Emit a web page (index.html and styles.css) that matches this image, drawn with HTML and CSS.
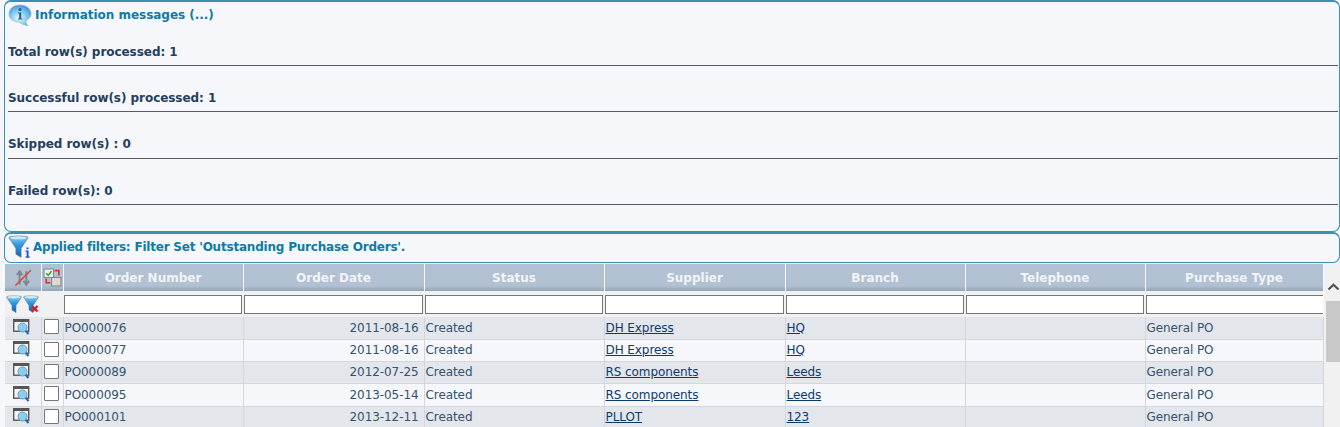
FILE: index.html
```html
<!DOCTYPE html>
<html lang="en">

<head>
    <meta charset="UTF-8">
    <title>Purchase Orders</title>
    <link rel="stylesheet" href="styles.css">
</head>

<body>
    <svg class="defs" width="0" height="0">
        <defs>
            <linearGradient id="funnelBlue" x1="0" y1="0" x2="0" y2="1">
                <stop offset="0" stop-color="#8fd4f2" />
                <stop offset="0.45" stop-color="#2a93dc" />
                <stop offset="1" stop-color="#1a5fb0" />
            </linearGradient>
            <radialGradient id="bubbleBlue" cx="0.45" cy="0.65" r="0.7">
                <stop offset="0" stop-color="#eef9fe" />
                <stop offset="0.5" stop-color="#86ccf1" />
                <stop offset="1" stop-color="#2f8fd3" />
            </radialGradient>
            <symbol id="funnel" viewBox="0 0 16 18">
                <path d="M.5 2C.5 .5 15.500 .5 15.500 2L10 10.500V17.500L6 15V10.500Z" fill="url(#funnelBlue)" stroke="#5f7f98" stroke-width=".6" />
                <ellipse cx="8" cy="2.200" rx="6.500" ry="1.200" fill="#cfeaf7" />
            </symbol>
            <symbol id="viewIcon" viewBox="0 0 17 16">
                <rect x=".7" y=".7" width="15" height="11.500" fill="#f4f4f4" stroke="#555" stroke-width="1.400" />
                <rect x="1" y="1" width="14" height="2" fill="#555" />
                <circle cx="9.500" cy="8.500" r="4.500" fill="#86cff3" stroke="#7d97aa" />
                <path d="M12.800 12 15.500 15" stroke="#1d62c4" stroke-width="2" />
            </symbol>
        </defs>
    </svg>

    <div class="panel infoPanel">
        <div class="panelTitle">
            <svg class="bubble" width="24" height="23" viewBox="0 0 24 23">
                <path d="M12 1C5.500 1 1 4.800 1 9.800 1 14.600 5.500 18 11 18 13.500 20 16.500 21.500 20 21.500 18.300 20 17.800 18.500 18 16.600 21.300 15 23 12.600 23 9.800 23 4.800 18.500 1 12 1Z" fill="url(#bubbleBlue)" stroke="#9cb8c8" stroke-width=".8" />
                <circle cx="12" cy="5.600" r="1.500" fill="#2a5d84" />
                <path d="M10 8.500H13.200V14.500H14.400V15.500H10V14.500H11.200V9.500H10Z" fill="#2a5d84" />
            </svg>
            <span>Information messages (...)</span>
        </div>
        <div class="msg">Total row(s) processed: 1</div>
        <div class="msg">Successful row(s) processed: 1</div>
        <div class="msg">Skipped row(s) : 0</div>
        <div class="msg">Failed row(s): 0</div>
    </div>

    <div class="panel filterPanel">
        <svg class="funnelBig" width="22" height="24" viewBox="0 0 22 24">
            <use href="#funnel" x="0" y="0" width="21" height="23" />
            <path d="M18.500 12.500h2v1.800h-2ZM17.500 15.500h3v6h1.200v1.300h-4.200v-1.300h1.200v-4.800h-1.200Z" fill="#2447d8" />
        </svg>
        <span>Applied filters: Filter Set 'Outstanding Purchase Orders'.</span>
    </div>

    <div class="gridWrap">
        <table class="grid">
            <colgroup>
                <col class="colView">
                <col class="colCheck">
                <col class="colA">
                <col class="colB">
                <col class="colA">
                <col class="colB">
                <col class="colA">
                <col class="colA">
                <col class="colLast">
            </colgroup>
            <thead>
                <tr class="headRow">
                    <th>
                        <svg width="20" height="20" viewBox="0 0 18 18">
                            <path d="M6 15V4M3.500 6.500 6 3 8.500 6.500M12 3V14M9.500 11.500 12 15 14.500 11.500" fill="none" stroke="#7d8890" stroke-width="1.800" />
                            <path d="M2 16 16 2" stroke="#e0413c" stroke-width="1.400" />
                        </svg>
                    </th>
                    <th>
                        <svg width="19" height="19" viewBox="0 0 18 18">
                            <rect x="1" y="1" width="9" height="8" fill="#eef2ee" stroke="#777" stroke-width=".8" />
                            <path d="M3 5 5 7 8 3" fill="none" stroke="#3aa02f" stroke-width="1.500" />
                            <rect x="8" y="9" width="9" height="8" fill="#d9d9d9" stroke="#777" stroke-width=".8" />
                            <path d="M11 2.500H15V7M3 10V14H7" fill="none" stroke="#d6332e" stroke-width="1.500" />
                        </svg>
                    </th>
                    <th>Order Number</th>
                    <th>Order Date</th>
                    <th>Status</th>
                    <th>Supplier</th>
                    <th>Branch</th>
                    <th>Telephone</th>
                    <th>Purchase Type</th>
                </tr>
                <tr class="filterRow">
                    <td colspan="2">
                        <div class="filterIcons">
                            <svg width="16" height="18"><use href="#funnel" width="16" height="18" /></svg>
                            <svg width="16" height="18" viewBox="0 0 16 18">
                                <use href="#funnel" width="16" height="18" />
                                <path d="M9 11 14.500 16.500M14.500 11 9 16.500" stroke="#d0202a" stroke-width="2.400" />
                            </svg>
                        </div>
                    </td>
                    <td><input type="text"></td>
                    <td><input type="text"></td>
                    <td><input type="text"></td>
                    <td><input type="text"></td>
                    <td><input type="text"></td>
                    <td><input type="text"></td>
                    <td class="lastFilter"><input type="text"></td>
                </tr>
            </thead>
            <tbody>
                <tr>
                    <td class="iconCell"><svg width="17" height="16"><use href="#viewIcon" /></svg></td>
                    <td class="checkCell"><span class="check"></span></td>
                    <td>PO000076</td>
                    <td class="num">2011-08-16</td>
                    <td>Created</td>
                    <td><a href="#">DH Express</a></td>
                    <td><a href="#">HQ</a></td>
                    <td></td>
                    <td>General PO</td>
                </tr>
                <tr>
                    <td class="iconCell"><svg width="17" height="16"><use href="#viewIcon" /></svg></td>
                    <td class="checkCell"><span class="check"></span></td>
                    <td>PO000077</td>
                    <td class="num">2011-08-16</td>
                    <td>Created</td>
                    <td><a href="#">DH Express</a></td>
                    <td><a href="#">HQ</a></td>
                    <td></td>
                    <td>General PO</td>
                </tr>
                <tr>
                    <td class="iconCell"><svg width="17" height="16"><use href="#viewIcon" /></svg></td>
                    <td class="checkCell"><span class="check"></span></td>
                    <td>PO000089</td>
                    <td class="num">2012-07-25</td>
                    <td>Created</td>
                    <td><a href="#">RS components</a></td>
                    <td><a href="#">Leeds</a></td>
                    <td></td>
                    <td>General PO</td>
                </tr>
                <tr class="tall">
                    <td class="iconCell"><svg width="17" height="16"><use href="#viewIcon" /></svg></td>
                    <td class="checkCell"><span class="check"></span></td>
                    <td>PO000095</td>
                    <td class="num">2013-05-14</td>
                    <td>Created</td>
                    <td><a href="#">RS components</a></td>
                    <td><a href="#">Leeds</a></td>
                    <td></td>
                    <td>General PO</td>
                </tr>
                <tr>
                    <td class="iconCell"><svg width="17" height="16"><use href="#viewIcon" /></svg></td>
                    <td class="checkCell"><span class="check"></span></td>
                    <td>PO000101</td>
                    <td class="num">2013-12-11</td>
                    <td>Created</td>
                    <td><a href="#">PLLOT</a></td>
                    <td><a href="#">123</a></td>
                    <td></td>
                    <td>General PO</td>
                </tr>
            </tbody>
        </table>
        <div class="scrollBar">
            <svg class="upArrow" width="13" height="8" viewBox="0 0 13 8">
                <path d="M1.500 6.500 6.500 1.800 11.500 6.500" fill="none" stroke="#505050" stroke-width="2.200" />
            </svg>
            <div class="thumb"></div>
        </div>
    </div>
</body>

</html>
```
FILE: styles.css
```css
* {
    margin: 0;
    padding: 0;
    box-sizing: border-box;
}

html,
body {
    height: 427px;
    overflow: hidden;
}

body {
    font-family: "DejaVu Sans", Verdana, sans-serif;
    font-size: 12px;
    color: #34526f;
    background-color: #f6f7fa;
}

.defs {
    position: absolute;
}

.panel {
    margin-left: 4px;
    background-color: #f6f7fa;
    border: 1px solid #3a8fb3;
    border-radius: 7px;
}

.infoPanel {
    height: 232px;
    border-top-width: 2px;
    padding: 2px 1px 0 3px;
}

.panelTitle {
    display: flex;
    align-items: flex-start;
    gap: 3px;
    height: 23px;
    font-weight: bold;
    letter-spacing: -0.03px;
    color: #0d7ba6;
}

.panelTitle span {
    padding-top: 4px;
}

.msg {
    height: 46.33px;
    padding-top: 25px;
    font-weight: bold;
    letter-spacing: -0.05px;
    color: #23405f;
    border-bottom: 1px solid #555b60;
}

.panelTitle + .msg {
    margin-top: -7px;
    height: 46px;
}

.filterPanel {
    display: flex;
    align-items: flex-start;
    gap: 3px;
    height: 31px;
    padding: 1px 0 0 3px;
    border-top-width: 2px;
    font-weight: bold;
    letter-spacing: -0.21px;
    color: #0d7ba6;
}

.filterPanel span {
    padding-top: 5px;
}

.funnelBig {
    flex: none;
}

.gridWrap {
    display: flex;
    margin: 1px 0 0 5px;
}

.grid {
    flex: none;
    width: 1318px;
    table-layout: fixed;
    border-collapse: collapse;
}

.colView {
    width: 36px;
}

.colCheck {
    width: 22px;
}

.colA {
    width: 180px;
}

.colB {
    width: 181px;
}

.colLast {
    width: 178px;
}

.headRow th {
    height: 27px;
    color: #f1f4f8;
    background: linear-gradient(#b1c1d2 0, #b1c1d2 80%, #93a4b6 100%);
    border-right: 1px solid #f6f7fa;
    vertical-align: middle;
}

.headRow svg {
    display: block;
    margin: 0 auto;
}

.filterRow td {
    height: 26px;
    padding: 0 1px;
    background-color: #f1f1f2;
    vertical-align: middle;
}

.filterRow input {
    display: block;
    width: 100%;
    height: 19px;
    border: 1px solid #767676;
    background-color: #fff;
}

.filterRow .lastFilter {
    padding-right: 0;
    overflow: hidden;
}

.lastFilter input {
    width: calc(100% + 4px);
}

.filterIcons {
    display: flex;
    gap: 1px;
}

tbody tr {
    height: 22px;
}

tbody tr.tall {
    height: 23px;
}

tbody tr:nth-child(odd) {
    background-color: #e3e6eb;
}

tbody tr:nth-child(even) {
    background-color: #f6f7fa;
}

tbody td {
    padding: 0 1px;
    white-space: nowrap;
    letter-spacing: -0.08px;
    border-right: 1px solid #d3d6da;
    border-bottom: 1px solid #d3d6da;
    vertical-align: middle;
}

tbody td.num {
    padding-right: 5px;
    text-align: right;
}

tbody a {
    color: #0d3a70;
}

.iconCell svg {
    display: block;
    margin: 0 auto;
    position: relative;
    top: -1px;
    left: -1px;
}

tbody td.checkCell {
    padding: 0 2px 0 0;
}

.check {
    display: block;
    width: 15px;
    height: 15px;
    margin: -2px auto 0;
    background-color: #fff;
    border: 1px solid #767676;
    border-radius: 1px;
}

.scrollBar {
    flex: none;
    width: 17px;
    height: 163px;
    padding-top: 19px;
    background-color: #f1f1f1;
}

.upArrow {
    display: block;
    margin-left: 3px;
}

.thumb {
    width: 15px;
    height: 61px;
    margin: 10px 0 0 2px;
    background-color: #c8c8c8;
}
```
